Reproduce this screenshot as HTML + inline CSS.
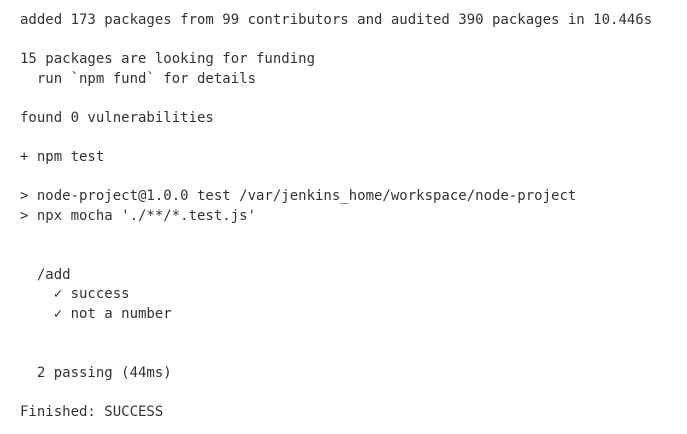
<!DOCTYPE html>
<html><head><style>
html,body{margin:0;padding:0;background:#fff;width:687px;height:434px;overflow:hidden}
pre{margin:0;position:absolute;left:20px;top:11px;font-family:"DejaVu Sans Mono","Liberation Mono",monospace;font-size:14px;line-height:19.6px;color:#333}
</style></head><body>
<pre>added 173 packages from 99 contributors and audited 390 packages in 10.446s

15 packages are looking for funding
  run `npm fund` for details

found 0 vulnerabilities

+ npm test

&gt; node-project@1.0.0 test /var/jenkins_home/workspace/node-project
&gt; npx mocha './**/*.test.js'


  /add
    ✓ success
    ✓ not a number


  2 passing (44ms)

Finished: SUCCESS</pre>
</body></html>
